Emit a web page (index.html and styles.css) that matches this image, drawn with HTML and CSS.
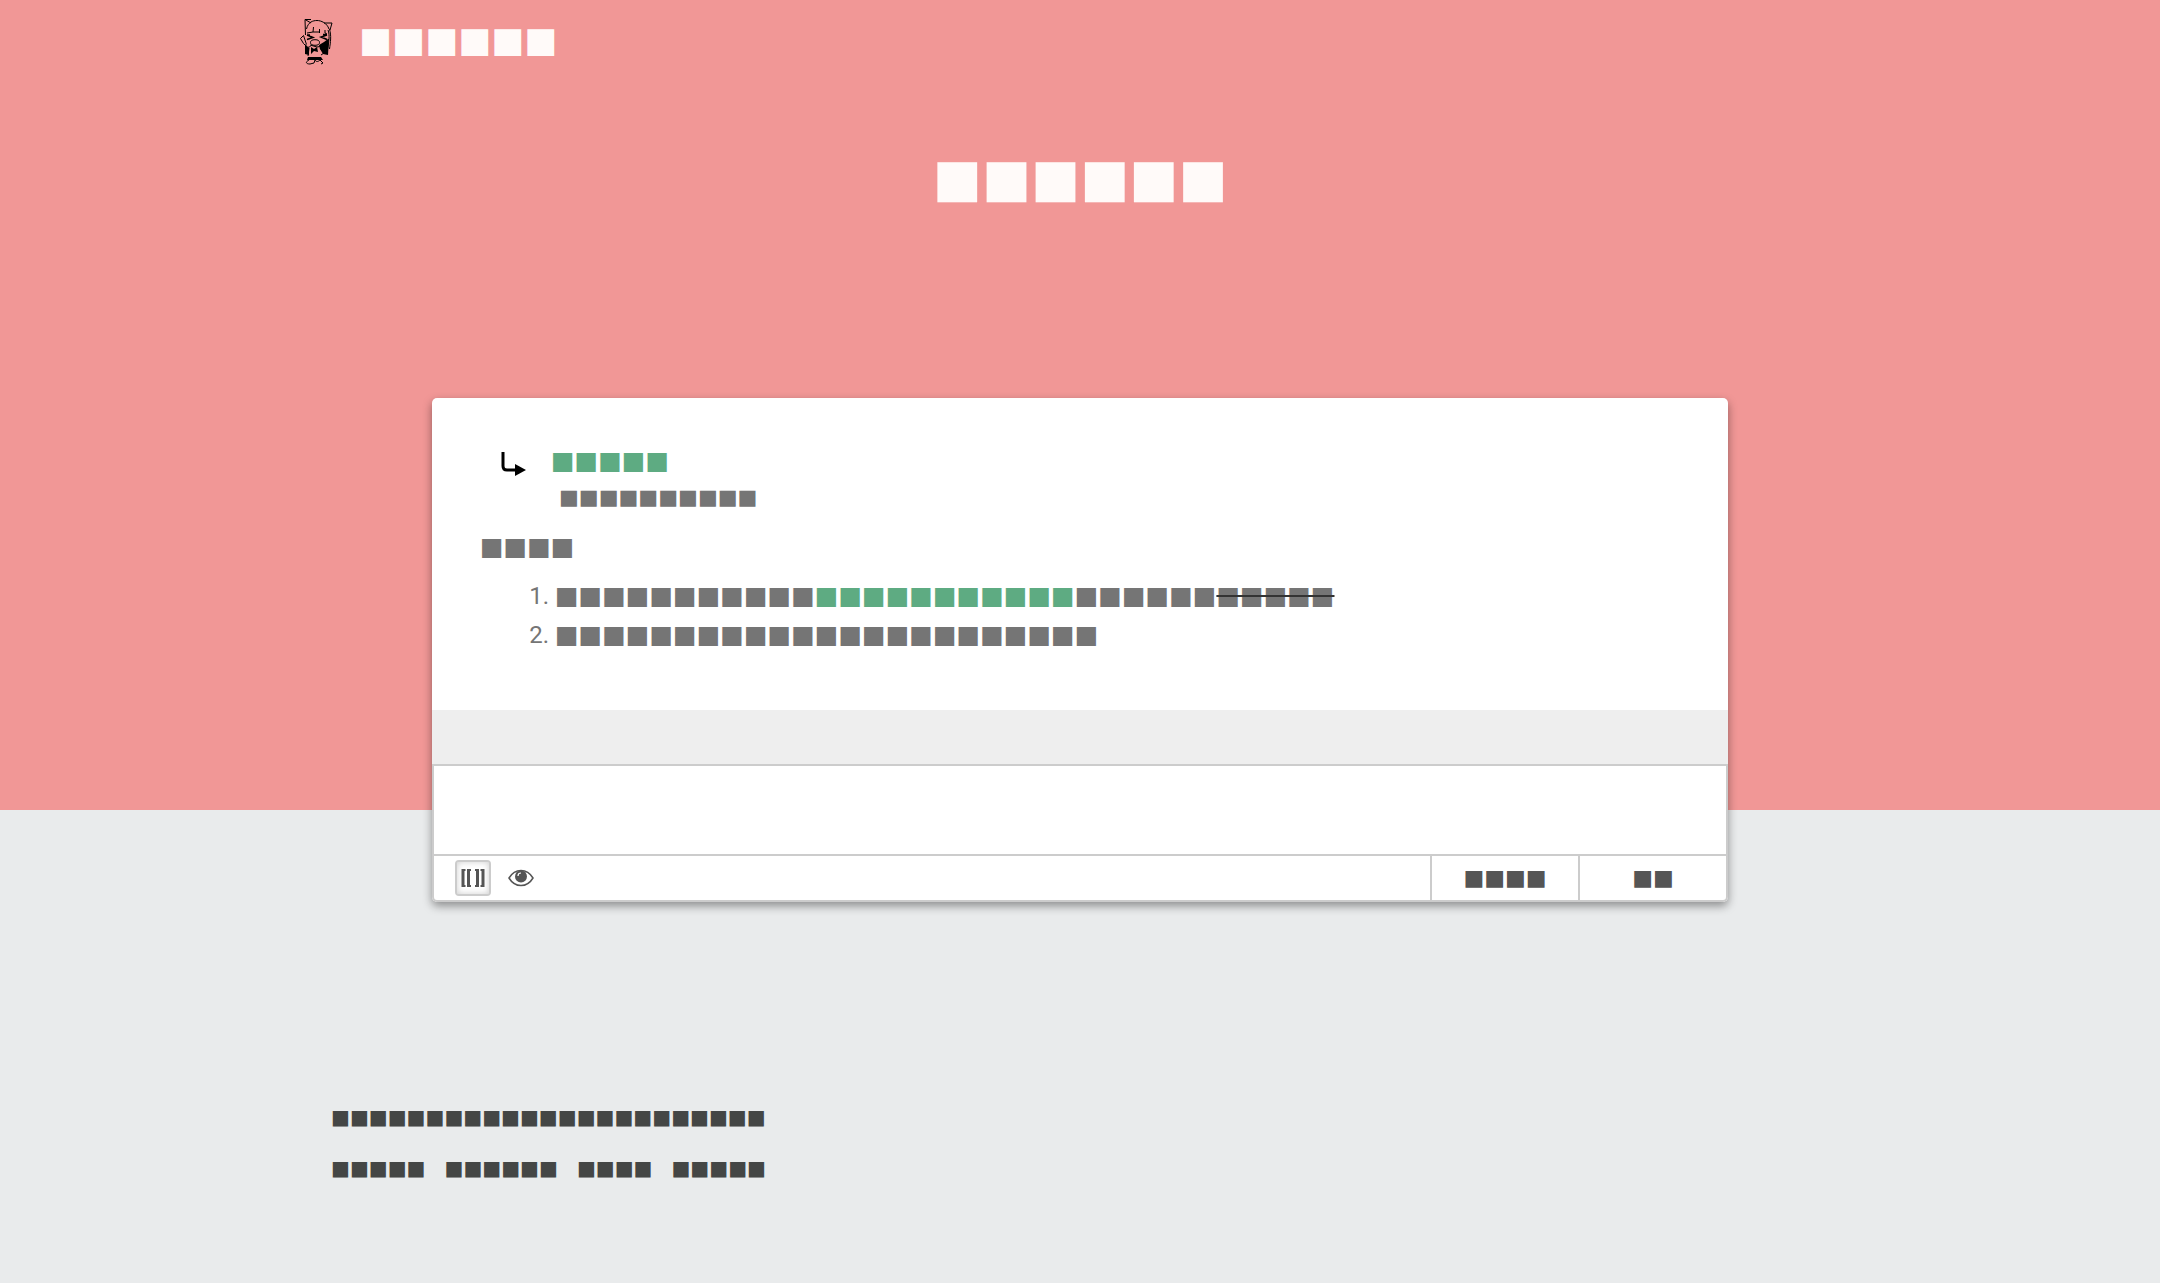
FILE: index.html
```html
<!DOCTYPE html>
<html lang="zh">
<head>
<meta charset="utf-8">
<meta name="viewport" content="width=device-width, initial-scale=1">
<title>■■■■■■</title>
<link rel="stylesheet" href="styles.css">
</head>
<body>
<div class="hero">
  <header class="topbar">
    <a class="brand" href="#">
      <svg class="logo" viewBox="0 0 34 48" aria-hidden="true" fill="none" stroke="#000" stroke-width="1">
        <path fill="#000" stroke="none" d="M5 27l4 4v7l-4-1zM28 22l1 0-1 16-5-1-3-5-1-4 5-3zM11 30l3 2 3-2 1 5-4-1-3 3zM8 40l13 0 2 3H7z"/>
        <path d="M5.500 18L5 2.500 11 6M5 2.500l6 0M6.500 12C8 5 13 3.500 17 3.500S27 6 29 12M24 6l8 0-2 7M28 13c2 5 1 12-1 22M29.500 12c2 7 1 13 0 20M13.500 10l-.5 5-6 1M13 15h6M19.500 12v4M25 13l0 3 2 1"/>
        <path stroke-width="1.500" d="M7 18l6 2.500-6 2M27 18l-6 2 6 2.500M7 18h3M23 17.500h4"/>
        <ellipse cx="15" cy="25.500" rx="4.500" ry="2.800"/>
        <path d="M3.500 18.500l-3 3 3 5 4 4 3-1M3.500 18.500l3 9M10 28l7 2c3 0 6-2 8-5M9 31l-1 8M20 31l4 5-3 2M22 31l3 3M9 43c-4 2-3 4 1 4l4-1 1-3M20 43l3 3-2 1M15 43c1 2 3 2 5 0"/>
      </svg>
      <span class="brand-name">■■■■■■</span>
    </a>
  </header>
  <h1 class="title">■■■■■■</h1>
</div>
<main class="card">
  <article class="content">
    <div class="redirect">
      <svg class="arrow" viewBox="0 0 26 26" aria-hidden="true"><path d="M2 1v14q0 4 4 4h9" fill="none" stroke="#000" stroke-width="3"/><path d="M14 13l11 6-11 6z"/></svg>
      <div class="redirect-text">
        <a class="link" href="#">■■■■■</a>
        <p class="note">■■■■■■■■■■</p>
      </div>
    </div>
    <p class="lead">■■■■</p>
    <ol class="list">
      <li>■■■■■■■■■■■<a class="link" href="#">■■■■■■■■■■■</a>■■■■■■<del>■■■■■</del></li>
      <li>■■■■■■■■■■■■■■■■■■■■■■■</li>
    </ol>
  </article>
  <div class="strip"></div>
  <form class="editor">
    <textarea class="input" aria-label="■■■■"></textarea>
    <div class="actions">
      <div class="tools">
        <button class="tool tool-on" type="button" aria-label="[[ ]]">
          <svg width="24" height="18" viewBox="0 0 24 18" aria-hidden="true"><path d="M0.500 0h4v2h-1v14h1v2h-4zM6 0h4v2H9v14h1v2H6zM14 0h4v18h-4v-2h1V2h-1zM19.500 0h4v18h-4v-2h1V2h-1z" fill="#555"/></svg>
        </button>
        <button class="tool" type="button" aria-label="◉">
          <svg width="26" height="18" viewBox="0 0 26 18" aria-hidden="true"><path d="M1 9C7-1 19-1 25 9 19 19 7 19 1 9z" fill="none" stroke="#555" stroke-width="1.500"/><circle cx="13" cy="7.500" r="6" fill="#555"/><path d="M10 7q0-3 3-3" fill="none" stroke="#fff" stroke-width="1.200"/></svg>
        </button>
      </div>
      <button class="action" type="button">■■■■</button>
      <button class="action" type="submit">■■</button>
    </div>
  </form>
</main>
<footer class="footer">
  <p>■■■■■■■■■■■■■■■■■■■■■■■</p>
  <nav class="links"><a href="#">■■■■■</a><a href="#">■■■■■■</a><a href="#">■■■■</a><a href="#">■■■■■</a></nav>
</footer>
</body>
</html>
```
FILE: styles.css
```css
* { box-sizing: border-box; }
body {
  margin: 0;
  background: #e9ebec;
  color: #757575;
  font: 25px/39px Roboto, "DejaVu Sans", sans-serif;
}
p, h1, ol { margin: 0; }
a { text-decoration: none; }
.hero {
  height: 810px;
  background: #f19796;
  color: #fffaf9;
}
.topbar {
  padding: 17px 300px;
}
.brand {
  display: inline-flex;
  align-items: center;
  gap: 25px;
  color: inherit;
  font-size: 35px;
  line-height: 48px;
}
.logo { width: 34px; height: 48px; }
.title {
  padding-top: 56px;
  font-size: 52px;
  font-weight: 400;
  line-height: 60px;
  text-align: center;
}
.card {
  width: 60%;
  margin: -412px auto 0;
  background: #fff;
  border-radius: 5px;
  box-shadow: 0 4px 10px rgba(0, 0, 0, .4);
}
.content { padding: 43px 48px 56px; }
.redirect {
  display: flex;
  gap: 24px;
  padding-left: 21px;
  margin-bottom: 12px;
}
.arrow { width: 26px; height: 26px; margin-top: 10px; }
.link { color: #5eab82; }
.note {
  padding-left: 8px;
  font-size: 21px;
  line-height: 35px;
}
.list {
  margin-top: 10px;
  padding-left: 75px;
}
.list li::marker { font-size: 24px; }
del { text-decoration: line-through #333 2px; }
.strip { height: 54px; background: #eee; }
.editor {
  border: 2px solid #ccc;
  border-radius: 0 0 5px 5px;
}
.input {
  display: block;
  width: 100%;
  height: 88px;
  border: 0;
  padding: 8px;
  resize: none;
  outline: 0;
  background: #fff;
}
.actions {
  display: flex;
  height: 46px;
  border-top: 2px solid #ccc;
}
.tools {
  display: flex;
  flex: 1;
  align-items: center;
  gap: 12px;
  padding-left: 21px;
}
.tool {
  display: grid;
  place-items: center;
  width: 36px;
  height: 36px;
  padding: 0;
  border: 0;
  border-radius: 4px;
  background: none;
}
.tool-on {
  border: 2px solid #ccc;
  box-shadow: inset 0 0 6px rgba(0, 0, 0, .2);
}
.action {
  width: 148px;
  padding: 0;
  border: 0;
  border-left: 2px solid #ccc;
  background: none;
  color: #555;
  font: 22px/30px Roboto, "DejaVu Sans", sans-serif;
}
.footer {
  padding: 200px 331px 0;
  color: #444645;
  font-size: 20px;
  line-height: 31px;
}
.links {
  display: flex;
  gap: 19px;
  padding-top: 20px;
}
.links a { color: inherit; }
```
